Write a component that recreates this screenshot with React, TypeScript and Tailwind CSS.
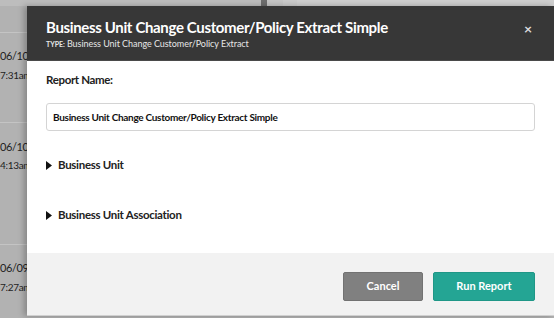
import React from "react";

const font = { fontFamily: '"Lato", "Open Sans", sans-serif' };

function Caret() {
  return (
    <svg width="6" height="9" viewBox="0 0 6 9" className="shrink-0">
      <path d="M0 0 L6 4.5 L0 9 Z" fill="#111" />
    </svg>
  );
}

export default function App() {
  return (
    <div
      className="relative w-[554px] h-[318px] overflow-hidden bg-[#b2b2b2]"
      style={font}
    >
      {/* dimmed background page */}
      <div className="flex h-[6px]">
        <div className="w-[261px] bg-[#bdbdbd]" />
        <div className="w-[6px] bg-[#6e6e6e]" />
        <div className="w-[16px] bg-[#c6c6c6]" />
        <div className="w-[14px] bg-[#cbcbcb]" />
        <div className="flex-1 bg-[#cfcfcf]" />
      </div>
      <div className="flex flex-col w-[40px] text-[#222] leading-none">
        <div className="h-[27px] border-b border-[#c4c4c4]" />
        <div className="flex flex-col gap-[9px] h-[90px] pt-[17px] border-b border-[#c4c4c4]">
          <span className="text-[11px] tracking-[-0.4px]">06/10/</span>
          <span className="text-[10px] tracking-[-0.3px]">7:31am</span>
        </div>
        <div className="flex flex-col gap-[8px] h-[122px] pt-[18px] border-b border-[#c4c4c4]">
          <span className="text-[11px] tracking-[-0.4px]">06/10/</span>
          <span className="text-[10px] tracking-[-0.3px]">4:13am</span>
        </div>
        <div className="flex flex-col gap-[9px] pt-[17px]">
          <span className="text-[11px] tracking-[-0.4px]">06/09/</span>
          <span className="text-[10px] tracking-[-0.3px]">7:27am</span>
        </div>
      </div>

      {/* modal */}
      <div className="absolute left-[27px] top-[6px] right-0 bottom-[2px] flex flex-col bg-white shadow-[-3px_0_6px_rgba(0,0,0,0.25)]">
        <div className="relative h-[55px] bg-[#373737] border-b border-[#4a4a4a] pl-[19px] pt-[11px]">
          <div className="text-white font-bold text-[15px] leading-[20px] tracking-[-0.35px]">
            Business Unit Change Customer/Policy Extract Simple
          </div>
          <div className="text-[#e6e6e6] text-[9px] leading-[12px] mt-[1px] tracking-[-0.05px]">
            <span className="font-bold text-[7px]">TYPE:</span> Business Unit Change Customer/Policy Extract
          </div>
          <div className="absolute right-[22px] top-[16px] text-[#dcdcdc] font-bold text-[14px] leading-none">
            ×
          </div>
        </div>
        <div className="flex-1 flex flex-col px-[19px] pt-[11px]">
          <div className="text-[11.5px] font-bold text-[#222] leading-[16px] tracking-[-0.35px]">Report Name:</div>
          <div className="mt-[15px] h-[28px] border border-[#d4d4d4] rounded-[3px] flex items-center px-[6px] text-[10px] font-bold text-[#111] tracking-[-0.3px]">
            Business Unit Change Customer/Policy Extract Simple
          </div>
          <div className="mt-[26px] flex items-center gap-[6px] text-[11.5px] font-bold text-[#222] leading-[16px] tracking-[-0.3px]">
            <Caret />
            Business Unit
          </div>
          <div className="mt-[34px] flex items-center gap-[6px] text-[11.5px] font-bold text-[#222] leading-[16px] tracking-[-0.3px]">
            <Caret />
            Business Unit Association
          </div>
        </div>
        <div className="h-[63px] bg-[#f2f2f2] border-b border-[#d0d0d0] flex items-center justify-end gap-[10px] pr-[19px] pt-[4px]">
          <button className="w-[80px] h-[29px] rounded-[2px] bg-[#808080] border border-[#727272] text-white font-bold text-[11px]">
            Cancel
          </button>
          <button className="w-[102px] h-[29px] rounded-[2px] bg-[#24a594] border border-[#1f9787] text-white font-bold text-[11px]">
            Run Report
          </button>
        </div>
      </div>
    </div>
  );
}
